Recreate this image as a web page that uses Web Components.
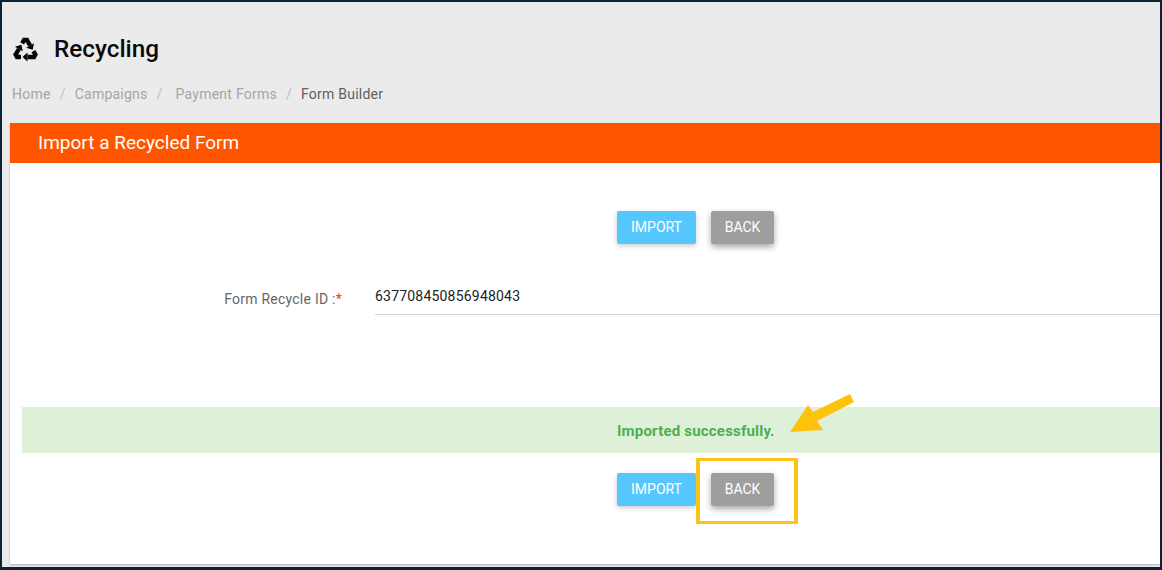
<!DOCTYPE html>
<html>
<head>
<meta charset="utf-8">
<title>Recycling</title>
<style>
html, body { margin: 0; padding: 0; background: #ecebec; font-family: Roboto, sans-serif; }
</style>
</head>
<body>
<app-shell>
  <page-head title="Recycling" crumbs="Home|Campaigns|Payment Forms|Form Builder"></page-head>
  <form-card heading="Import a Recycled Form">
    <button-row slot="top"></button-row>
    <id-field slot="field" label="Form Recycle ID :" value="637708450856948043"></id-field>
    <success-bar slot="status">Imported successfully.</success-bar>
    <button-row slot="bottom" id="lower"></button-row>
  </form-card>
  <call-outs></call-outs>
</app-shell>

<script>
/* outer frame of the screenshot */
class AppShell extends HTMLElement {
  constructor() {
    super();
    this.attachShadow({mode: 'open'}).innerHTML = `
    <style>
    :host {
      display: block;
      position: relative;
      box-sizing: border-box;
      width: 1162px;
      height: 570px;
      overflow: hidden;
      background: #ecebec;
      border: solid #0b2537;
      border-width: 2px 2px 3px 2px;
    }
    </style>
    <slot></slot>`;
  }
}

/* title and breadcrumb */
class PageHead extends HTMLElement {
  constructor() {
    super();
    const crumbs = this.getAttribute('crumbs').split('|');
    const last = crumbs.length - 1;
    const html = crumbs.map((c, i) =>
      i === last ? `<span class="cur">${c}</span>` : `<span>${c}</span><i>/</i>`).join('');
    this.attachShadow({mode: 'open'}).innerHTML = `
    <style>
    :host {
      display: block;
      box-sizing: border-box;
      height: 121px;
      padding: 32px 0 0 10px;
    }
    h1 {
      display: flex;
      align-items: center;
      gap: 15px;
      margin: 0;
      height: 30px;
      font: 500 24.3px/30px Roboto, sans-serif;
      color: #0a0a0a;
    }
    svg { width: 27px; height: 26px; display: block; }
    nav {
      display: flex;
      margin-top: 21px;
      font: 14px/18px Roboto, sans-serif;
      color: #a5a5a5;
      letter-spacing: .24px;
    }
    i { font-style: normal; margin: 0 9px; color: #bdbdbd; }
    i:nth-of-type(2) { margin-right: 13px; }
    .cur { color: #5f5f5f; }
    </style>
    <h1>
      <svg viewBox="0 0 27 26">
        <defs>
          <g id="arrow">
            <path d="M10.12 7.35 L12.12 3.89 H14.88 L18.13 9.52" fill="none" stroke="#050505" stroke-width="4.4"/>
            <path d="M22.03 7.27 L14.23 11.77 L20.63 13.85 Z" fill="#050505"/>
          </g>
        </defs>
        <use href="#arrow"/>
        <use href="#arrow" transform="rotate(120 13.5 14.5)"/>
        <use href="#arrow" transform="rotate(240 13.5 14.5)"/>
      </svg>
      <span>${this.getAttribute('title')}</span>
    </h1>
    <nav>${html}</nav>`;
    this.removeAttribute('title');
  }
}

/* orange header plus white body */
class FormCard extends HTMLElement {
  constructor() {
    super();
    this.attachShadow({mode: 'open'}).innerHTML = `
    <style>
    :host {
      display: block;
      margin-left: 8px;
      box-shadow: 0 1px 2px rgba(0,0,0,.25);
      background: #fff;
      height: 441px;
    }
    header {
      height: 40px;
      padding-left: 28px;
      background: #ff5500;
      color: #fff;
      font: 19px/40px Roboto, sans-serif;
    }
    .body { padding-top: 48px; }
    .top { display: block; height: 33px; }
    .field { display: block; margin-top: 33px; }
    .status { display: block; margin: 92px 0 20px 12px; }
    </style>
    <header>${this.getAttribute('heading')}</header>
    <div class="body">
      <div class="top"><slot name="top"></slot></div>
      <div class="field"><slot name="field"></slot></div>
      <div class="status"><slot name="status"></slot></div>
      <slot name="bottom"></slot>
    </div>`;
  }
}

class ButtonRow extends HTMLElement {
  constructor() {
    super();
    this.attachShadow({mode: 'open'}).innerHTML = `
    <style>
    :host {
      display: flex;
      gap: 15px;
      padding-left: 607px;
    }
    button {
      height: 33px;
      padding: 0 0 2px;
      border: 0;
      border-radius: 2px;
      color: #fff;
      font: 14px Roboto, sans-serif;
      text-transform: uppercase;
      box-shadow: 0 2px 5px rgba(0,0,0,.2);
    }
    .import { width: 79px; background: #55c7fd; }
    .back { width: 63px; background: #9e9e9e; box-shadow: 0 3px 6px rgba(0,0,0,.35); }
    </style>
    <button class="import">Import</button>
    <button class="back">Back</button>`;
  }
}

class IdField extends HTMLElement {
  constructor() {
    super();
    this.attachShadow({mode: 'open'}).innerHTML = `
    <style>
    :host {
      display: grid;
      grid-template-columns: 332px 1fr;
      column-gap: 33px;
    }
    label {
      text-align: right;
      font: 14px/18px Roboto, sans-serif;
      letter-spacing: .24px;
      color: #666;
      padding-top: 13px;
    }
    label b { color: #e53935; font-weight: 400; }
    .value {
      height: 38px;
      box-sizing: border-box;
      padding-top: 10px;
      border-bottom: 1px solid #d5d5d5;
      font: 14px/18px Roboto, sans-serif;
      color: #222;
      letter-spacing: .2px;
    }
    </style>
    <label>${this.getAttribute('label')}<b>*</b></label>
    <div class="value">${this.getAttribute('value')}</div>`;
  }
}

class SuccessBar extends HTMLElement {
  constructor() {
    super();
    this.attachShadow({mode: 'open'}).innerHTML = `
    <style>
    :host {
      display: block;
      height: 46px;
      box-sizing: border-box;
      padding-left: 595px;
      background: #dff0d8;
      color: #4caf50;
      font: 700 15px/48px Roboto, sans-serif;
      letter-spacing: .2px;
    }
    </style>
    <slot></slot>`;
  }
}

/* annotations drawn over the shot */
class CallOuts extends HTMLElement {
  constructor() {
    super();
    this.attachShadow({mode: 'open'}).innerHTML = `
    <style>
    :host { display: block; position: absolute; left: -2px; top: -2px; width: 1162px; height: 570px; pointer-events: none; }
    .box { position: absolute; left: 696px; top: 458px; width: 94px; height: 60px; border: solid #fcc419; border-width: 3px 4px; }
    svg { position: absolute; left: 785px; top: 390px; }
    </style>
    <div class="box"></div>
    <svg width="72" height="48" viewBox="0 0 72 48">
      <path d="M65 4 L69 12 L32 31 L38 40 L5 42 L23 15 L28 22 Z" fill="#fdc30b"/>
    </svg>`;
  }
}

customElements.define('app-shell', AppShell);
customElements.define('page-head', PageHead);
customElements.define('form-card', FormCard);
customElements.define('button-row', ButtonRow);
customElements.define('id-field', IdField);
customElements.define('success-bar', SuccessBar);
customElements.define('call-outs', CallOuts);
</script>
</body>
</html>
